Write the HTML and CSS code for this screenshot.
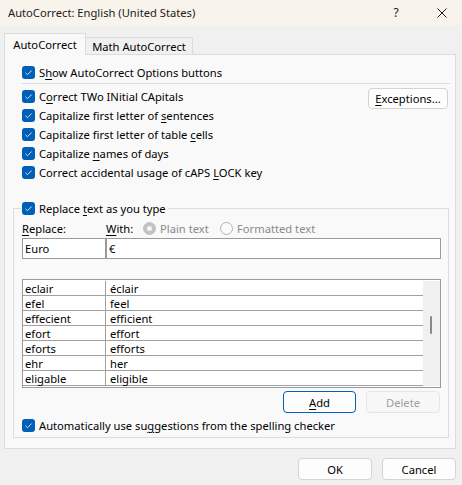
FILE: index.html
```html
<!DOCTYPE html>
<html>
<head>
<meta charset="utf-8">
<link rel="stylesheet" href="styles.css">
</head>
<body>
<div class="dialog">
  <div class="titlebar">
    <span class="title">AutoCorrect: English (United States)</span>
    <span class="help">?</span>
    <span class="close"><svg width="10" height="10" viewBox="0 0 10 10"><path d="M0.5 0.5 L9.5 9.5 M9.5 0.5 L0.5 9.5" stroke="#1a1a1a" stroke-width="1" fill="none"/></svg></span>
  </div>
  <div class="body">
    <div class="tabs">
      <div class="tab active">AutoCorrect</div>
      <div class="tab">Math AutoCorrect</div>
    </div>
    <div class="panel">
      <div class="check"><span class="box"><svg width="13" height="13" viewBox="0 0 13 13"><path d="M3.5 6.8 L5.5 8.7 L9.6 4.5" stroke="#cfe3f7" stroke-width="1" fill="none"/></svg></span><span>S<u>h</u>ow AutoCorrect Options buttons</span></div>
      <div class="sep"></div>
      <div class="opts">
        <div class="optlist">
          <div class="check"><span class="box"><svg width="13" height="13" viewBox="0 0 13 13"><path d="M3.5 6.8 L5.5 8.7 L9.6 4.5" stroke="#cfe3f7" stroke-width="1" fill="none"/></svg></span><span>C<u>o</u>rrect TWo INitial CApitals</span></div>
          <div class="check"><span class="box"><svg width="13" height="13" viewBox="0 0 13 13"><path d="M3.5 6.8 L5.5 8.7 L9.6 4.5" stroke="#cfe3f7" stroke-width="1" fill="none"/></svg></span><span>Capitalize first letter of <u>s</u>entences</span></div>
          <div class="check"><span class="box"><svg width="13" height="13" viewBox="0 0 13 13"><path d="M3.5 6.8 L5.5 8.7 L9.6 4.5" stroke="#cfe3f7" stroke-width="1" fill="none"/></svg></span><span>Capitalize first letter of table <u>c</u>ells</span></div>
          <div class="check"><span class="box"><svg width="13" height="13" viewBox="0 0 13 13"><path d="M3.5 6.8 L5.5 8.7 L9.6 4.5" stroke="#cfe3f7" stroke-width="1" fill="none"/></svg></span><span>Capitalize <u>n</u>ames of days</span></div>
          <div class="check"><span class="box"><svg width="13" height="13" viewBox="0 0 13 13"><path d="M3.5 6.8 L5.5 8.7 L9.6 4.5" stroke="#cfe3f7" stroke-width="1" fill="none"/></svg></span><span>Correct accidental usage of cAPS <u>L</u>OCK key</span></div>
        </div>
        <div class="btn exceptions"><u>E</u>xceptions...</div>
      </div>
      <fieldset class="group">
        <legend class="legend"><span class="box"><svg width="13" height="13" viewBox="0 0 13 13"><path d="M3.5 6.8 L5.5 8.7 L9.6 4.5" stroke="#cfe3f7" stroke-width="1" fill="none"/></svg></span><span>Replace <u>t</u>ext as you type</span></legend>
        <div class="labels">
          <span class="lbl-replace"><u>R</u>eplace:</span>
          <span class="lbl-with"><u>W</u>ith:</span>
          <span class="radio checked"></span>
          <span class="radio-text plain">Plain text</span>
          <span class="radio"></span>
          <span class="radio-text">Formatted text</span>
        </div>
        <div class="inputs">
          <div class="input replace">Euro</div>
          <div class="input with">€</div>
        </div>
        <div class="list">
          <div class="rows">
            <div class="row"><span class="c1">eclair</span><span class="c2">éclair</span></div>
            <div class="row"><span class="c1">efel</span><span class="c2">feel</span></div>
            <div class="row"><span class="c1">effecient</span><span class="c2">efficient</span></div>
            <div class="row"><span class="c1">efort</span><span class="c2">effort</span></div>
            <div class="row"><span class="c1">eforts</span><span class="c2">efforts</span></div>
            <div class="row"><span class="c1">ehr</span><span class="c2">her</span></div>
            <div class="row"><span class="c1">eligable</span><span class="c2">eligible</span></div>
          </div>
          <div class="scrollbar"><span class="thumb"></span></div>
        </div>
        <div class="listbtns">
          <div class="btn add"><u>A</u>dd</div>
          <div class="btn disabled">Delete</div>
        </div>
        <div class="check auto"><span class="box"><svg width="13" height="13" viewBox="0 0 13 13"><path d="M3.5 6.8 L5.5 8.7 L9.6 4.5" stroke="#cfe3f7" stroke-width="1" fill="none"/></svg></span><span>Automatically use su<u>g</u>gestions from the spelling checker</span></div>
      </fieldset>
    </div>
    <div class="footer">
      <div class="btn ok">OK</div>
      <div class="btn cancel">Cancel</div>
    </div>
  </div>
</div>
</body>
</html>
```

FILE: styles.css
```css
* { box-sizing: border-box; }
html, body { margin: 0; padding: 0; }
body {
  width: 462px;
  height: 485px;
  overflow: hidden;
  background: #f0f0f0;
  font-family: "Noto Sans", "Open Sans", sans-serif;
  font-size: 11.2px;
  line-height: 15px;
  color: #000;
}
u { text-underline-offset: 2px; text-decoration-thickness: 1px; }

.dialog { width: 462px; height: 485px; display: flex; flex-direction: column; }

.titlebar {
  height: 25px;
  background: #f8f4ec;
  display: flex;
  align-items: center;
  padding-left: 8px;
  padding-right: 11px;
  flex: none;
}
.title { flex: 1; color: #1a1a1a; font-size: 11.2px; }
.help { width: 20px; text-align: center; margin-right: 26px; color: #1a1a1a; font-size: 12px; }
.close { width: 19px; height: 10px; display: flex; justify-content: center; }

.body { padding: 8px 6px 0 4px; display: flex; flex-direction: column; }

.tabs { display: flex; align-items: flex-end; height: 22px; }
.tab {
  height: 18px;
  width: 108px;
  margin-left: -1px;
  border: 1px solid #dcdcdc;
  border-bottom: none;
  background: #f0f0f0;
  text-align: center;
  line-height: 18px;
}
.tab.active {
  position: relative;
  z-index: 1;
  margin-left: 0;
  width: 82px;
  height: 22px;
  line-height: 21px;
  background: #f9f9f9;
}

.panel {
  margin-top: -1px;
  width: 452px;
  height: 395px;
  border: 1px solid #dcdcdc;
  background: #f9f9f9;
  padding: 8px 5px 0 17px;
  display: flex;
  flex-direction: column;
}

.check { display: flex; align-items: center; height: 19px; gap: 4px; white-space: nowrap; }
.box {
  width: 13px;
  height: 13px;
  border-radius: 3px;
  background: #005fb8;
  display: block;
  flex: none;
}
.box svg { display: block; }

.sep { height: 1px; background: #dcdcdc; margin-top: 1px; }

.opts { display: flex; margin-top: 3px; }
.optlist { flex: 1; display: flex; flex-direction: column; }

.btn {
  height: 22px;
  width: 74px;
  border: 1px solid #d3d3d3;
  border-radius: 4px;
  background: #fdfdfd;
  display: flex;
  align-items: center;
  justify-content: center;
  flex: none;
}
.exceptions { width: 80px; height: 21px; margin-top: 1px; margin-right: 2px; }

.group {
  margin: 17px 1px 0 -9px;
  padding: 0 7px 2px 8px;
  border: 1px solid #dcdcdc;
  min-width: 0;
}
.legend {
  display: flex;
  align-items: center;
  gap: 4px;
  height: 19px;
  padding: 0 2px 0 1px;
  margin-left: -1px;
  white-space: nowrap;
}

.labels { display: flex; align-items: center; height: 19px; padding-top: 1px; }
.lbl-replace { width: 84px; }
.lbl-with { width: 37px; }
.radio {
  width: 13px;
  height: 13px;
  border-radius: 50%;
  border: 1px solid #b4b4b4;
  background: #fbfbfb;
  flex: none;
}
.radio.checked { background: #c2c2c2; border-color: #c2c2c2; display: flex; align-items: center; justify-content: center; }
.radio.checked::after { content: ""; width: 5px; height: 5px; border-radius: 50%; background: #f4f4f4; }
.radio-text { color: #8a8a8a; margin-left: 4px; }
.radio-text.plain { width: 60px; }

.inputs { display: flex; margin-top: 1px; height: 21px; }
.input {
  height: 21px;
  border: 1px solid #9a9a9a;
  background: #fff;
  padding-left: 2px;
  line-height: 19px;
}
.input.replace { width: 84px; }
.input.with { flex: 1; }

.list {
  margin-top: 20px;
  height: 109px;
  border: 1px solid #9a9a9a;
  background: #fff;
  padding: 1px 0;
  display: flex;
}
.rows { flex: 1; }
.row { height: 15px; border-bottom: 1px solid #a0a0a0; display: flex; }
.c1, .c2 { padding-top: 1px; line-height: 13px; }
.c1 { width: 83px; border-right: 1px solid #a0a0a0; padding-left: 2px; }
.c2 { padding-left: 4px; }
.scrollbar { width: 17px; background: #f0f0f0; position: relative; }
.thumb { position: absolute; left: 7px; top: 35px; width: 2px; height: 18px; background: #8a8a8a; border-radius: 1px; }

.listbtns { display: flex; justify-content: flex-end; gap: 10px; margin-top: 3px; padding-right: 1px; }
.add { border-color: #005fb8; height: 22px; width: 73px; }
.disabled { color: #a0a0a0; border-color: #e5e5e5; background: #f7f7f7; width: 74px; }

.auto { margin-top: 3px; }

.footer { display: flex; justify-content: flex-end; gap: 10px; padding-top: 9px; padding-right: 0; }
.ok, .cancel { width: 74px; height: 22px; }
```
